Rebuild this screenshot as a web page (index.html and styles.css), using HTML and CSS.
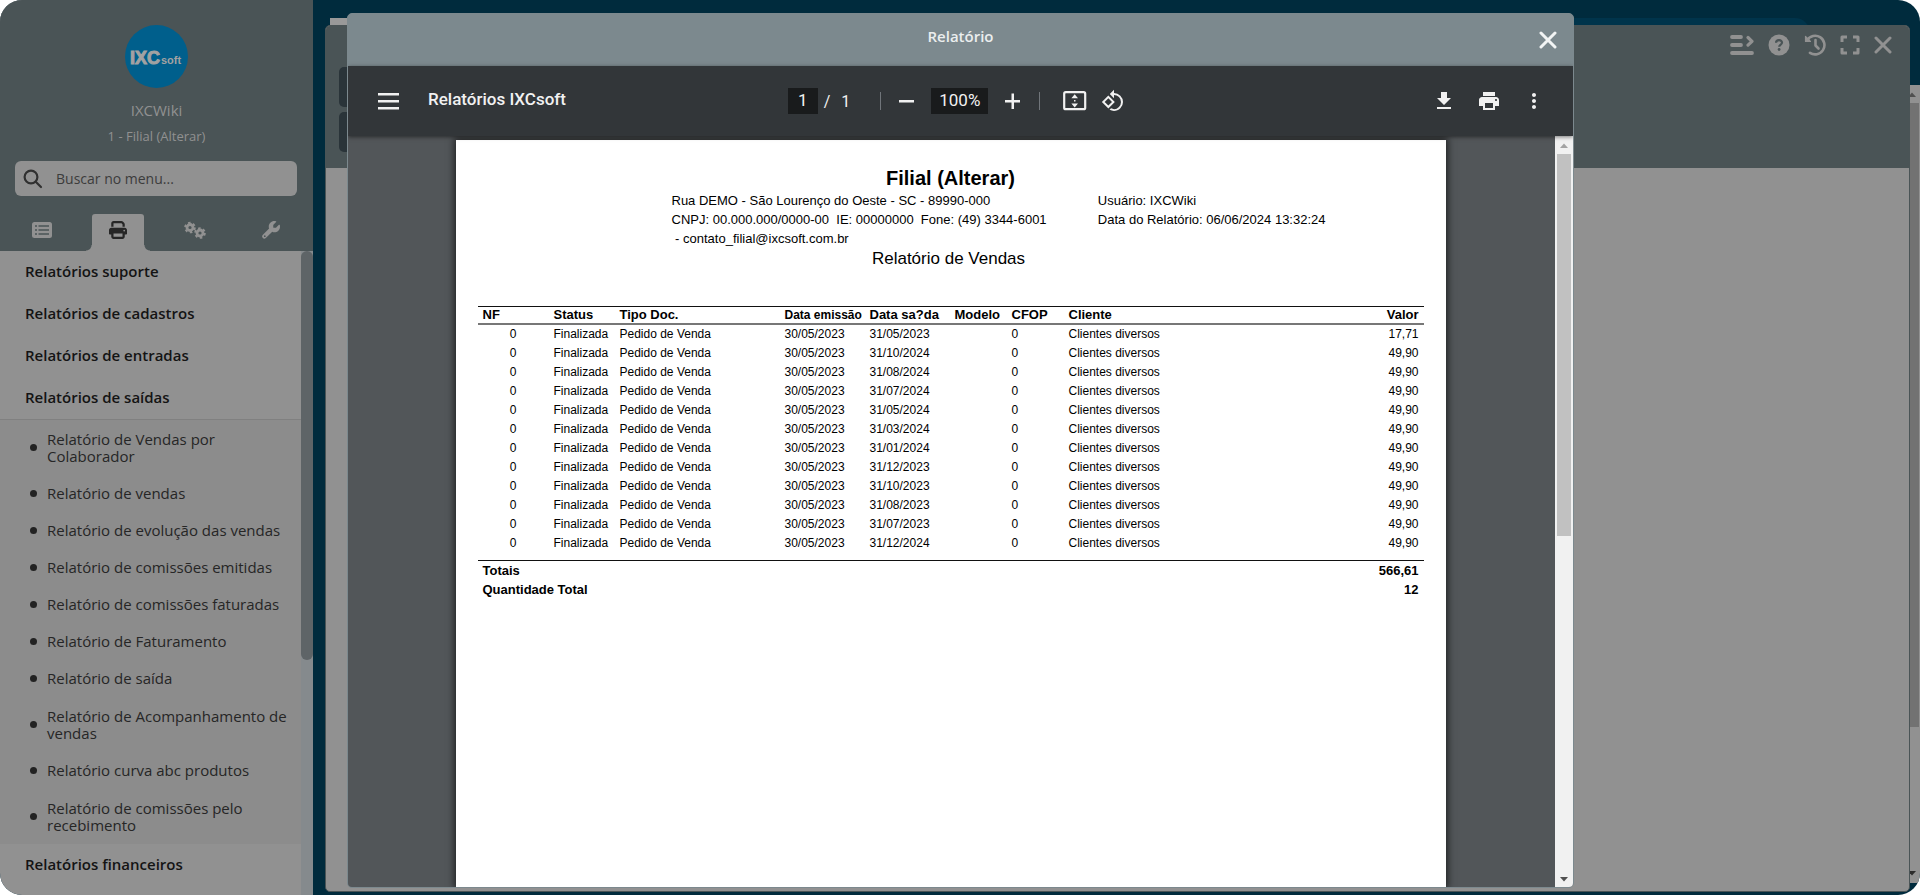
FILE: index.html
```html
<!DOCTYPE html>
<html lang="pt-BR">
<head>
<meta charset="utf-8">
<title>Relatório</title>
<link rel="stylesheet" href="styles.css">
</head>
<body>
<div class="app">
  <aside class="sidebar">
    <header class="profile">
      <svg class="logo" viewBox="0 0 63 63" role="img" aria-label="IXCsoft">
        <circle cx="31.5" cy="31.5" r="31.5" fill="#005f8c"/>
        <text class="logo-main" x="5" y="39">IXC</text>
        <text class="logo-sub" x="36" y="39">soft</text>
      </svg>
      <div class="user">IXCWiki</div>
      <div class="branch">1 - Filial (Alterar)</div>
      <label class="search">
        <svg width="20" height="20" viewBox="0 0 20 20" fill="none" stroke="#303030" stroke-width="2.2" stroke-linecap="round"><circle cx="8" cy="8" r="6.4"/><path d="M13 13l5 5"/></svg>
        <input type="text" placeholder="Buscar no menu..." aria-label="Buscar no menu">
      </label>
      <nav class="tabs">
        <button class="tab" aria-label="Lista"><svg width="20" height="16" viewBox="0 0 20 16"><rect width="20" height="16" rx="2.5" fill="#919191"/><path d="M3 4h2M3 8h2M3 12h2M6.500 4H17M6.500 8H17M6.500 12H17" stroke="#4a5456" stroke-width="1.600"/></svg></button>
        <button class="tab tab-on" aria-label="Relatórios"><svg width="18" height="18" viewBox="0 0 512 512" fill="#262626"><path d="M128 0C93 0 64 29 64 64v96h64V64h227l29 29v67h64V93c0-17-7-33-19-45L400 19C388 7 372 0 355 0H128zm256 352v96H128v-96h256zm64 32h32c18 0 32-14 32-32v-96c0-35-29-64-64-64H64c-35 0-64 29-64 64v96c0 18 14 32 32 32h32v64c0 35 29 64 64 64h256c35 0 64-29 64-64v-64zm-16-88a24 24 0 110-48 24 24 0 010 48z"/></svg></button>
        <button class="tab" aria-label="Configurações"><svg width="22" height="18" viewBox="0 0 22 18" fill="none" stroke="#919191"><circle cx="6" cy="6.500" r="3" stroke-width="2.800"/><circle cx="6" cy="6.500" r="4.800" stroke-width="2" stroke-dasharray="2.500 2.526"/><circle cx="16" cy="12" r="3" stroke-width="2.800"/><circle cx="16" cy="12" r="4.800" stroke-width="2" stroke-dasharray="2.500 2.526"/></svg></button>
        <button class="tab" aria-label="Ferramentas"><svg width="18" height="18" viewBox="0 0 512 512" fill="#919191"><path d="M352 320c88 0 160-72 160-160 0-15-2-30-6-45-3-11-17-14-25-5l-77 76c-3 3-7 5-11 5h-57c-9 0-16-7-16-16v-57c0-4 2-8 5-11l76-77c9-8 6-22-5-25-14-4-29-5-44-5-88 0-160 72-160 160 0 19 3 37 10 54L19 396a63.200 63.200 0 0089 89l184-182c19 11 38 17 60 17zM80 408a24 24 0 110 48 24 24 0 010-48z"/></svg></button>
      </nav>
    </header>
    <div class="menu-wrap">
      <nav class="menu">
        <a class="group" href="#">Relatórios suporte</a>
        <a class="group" href="#">Relatórios de cadastros</a>
        <a class="group" href="#">Relatórios de entradas</a>
        <a class="group" href="#">Relatórios de saídas</a>
        <ul class="sub">
          <li><a class="two" href="#">Relatório de Vendas por Colaborador</a></li>
          <li><a href="#">Relatório de vendas</a></li>
          <li><a href="#">Relatório de evolução das vendas</a></li>
          <li><a href="#">Relatório de comissões emitidas</a></li>
          <li><a href="#">Relatório de comissões faturadas</a></li>
          <li><a href="#">Relatório de Faturamento</a></li>
          <li><a href="#">Relatório de saída</a></li>
          <li><a class="two" href="#">Relatório de Acompanhamento de vendas</a></li>
          <li><a href="#">Relatório curva abc produtos</a></li>
          <li><a class="two" href="#">Relatório de comissões pelo recebimento</a></li>
        </ul>
        <a class="group" href="#">Relatórios financeiros</a>
      </nav>
      <div class="menu-track"><div class="menu-thumb"></div></div>
    </div>
  </aside>

  <main class="desk">
    <div class="desk-tab"></div>
    <div class="desk-pill"></div>
    <div class="desk-scroll">
      <svg width="10" height="18" viewBox="0 0 10 18"><path d="M-2 12l4-4.500 4 4.500z" fill="#505050"/></svg>
      <div class="desk-thumb"></div>
      <svg width="10" height="18" viewBox="0 0 10 18"><path d="M-2 6l4 4.500 4-4.500z" fill="#2c2c2c"/></svg>
    </div>
    <section class="window">
      <div class="window-head">
        <div class="window-side"><span></span><span></span></div>
        <div class="window-tools">
          <button aria-label="Recolher"><svg width="24" height="20" viewBox="0 0 24 20" fill="none" stroke="#919191" stroke-width="3.800" stroke-linecap="round"><path d="M2 2h9M2 10h9M2 18h20"/><path d="M18 2.500l4 3.800-4 3.800" stroke-width="3.200" stroke-linejoin="round"/></svg></button>
          <button aria-label="Ajuda"><svg width="22" height="22" viewBox="0 0 22 22"><circle cx="11" cy="11" r="10.500" fill="#919191"/><path d="M8 8.700c.2-3.500 6.200-3.300 6 .1-.1 1.800-2.800 1.900-2.800 4" fill="none" stroke="#4a5456" stroke-width="2.200"/><circle cx="11.100" cy="15.500" r="1.400" fill="#4a5456"/></svg></button>
          <button aria-label="Histórico"><svg width="22" height="22" viewBox="0 0 22 22" fill="none" stroke="#919191" stroke-width="2.600" stroke-linecap="round" stroke-linejoin="round"><path d="M3.200 6.200A9.300 9.300 0 1 1 6 18.800"/><path d="M1.500 2.500v5h5z" fill="#919191" stroke-width="1.200"/><path d="M11.500 6v5.500l3 3"/></svg></button>
          <button aria-label="Tela cheia"><svg width="20" height="20" viewBox="0 0 20 20" fill="none" stroke="#919191" stroke-width="3" stroke-linejoin="round"><path d="M2 7V2h5M13 2h5v5M18 13v5h-5M7 18H2v-5"/></svg></button>
          <button aria-label="Fechar janela"><svg width="18" height="18" viewBox="0 0 18 18" stroke="#919191" stroke-width="3" stroke-linecap="round"><path d="M2 2l14 14M16 2L2 16"/></svg></button>
        </div>
      </div>
    </section>
  </main>

  <section class="modal" role="dialog" aria-label="Relatório">
    <header class="modal-head">
      <h1>Relatório</h1>
      <button class="close" aria-label="Fechar"><svg width="18" height="18" viewBox="0 0 18 18" stroke="#f2f4f4" stroke-width="3" stroke-linecap="round"><path d="M2 2l14 14M16 2L2 16"/></svg></button>
    </header>
    <div class="toolbar">
      <div class="bar-left">
        <button aria-label="Menu"><svg width="22" height="18" viewBox="0 0 22 18" fill="#f1f1f1"><path d="M0 1h21v2.500H0zM0 8h21v2.500H0zM0 15h21v2.500H0z"/></svg></button>
        <span class="doc-name">Relatórios IXCsoft</span>
      </div>
      <div class="bar-mid">
        <input class="page-no" type="text" value="1" aria-label="Página"><span class="slash">/</span><span class="pages">1</span>
        <i class="rule"></i>
        <button aria-label="Diminuir zoom"><svg width="16" height="16" viewBox="0 0 16 16"><path d="M0 7h15v2.500H0z" fill="#f1f1f1"/></svg></button>
        <input class="zoom" type="text" value="100%" aria-label="Zoom">
        <button aria-label="Aumentar zoom"><svg width="16" height="16" viewBox="0 0 16 16"><path d="M0 7h6.500V.5H9V7h6v2.500H9V16H6.500V9.500H0z" fill="#f1f1f1"/></svg></button>
        <i class="rule rule-2"></i>
        <button class="fit" aria-label="Ajustar à página"><svg width="24" height="20" viewBox="0 0 24 20"><rect x="1.200" y="1.200" width="21" height="17" rx="1.500" fill="none" stroke="#f1f1f1" stroke-width="2.200"/><path d="M11.700 3.300l3.300 4h-6.600zM11.700 16.400l3.300-4h-6.600zM11 9h1.500v1.500H11z" fill="#f1f1f1"/></svg></button>
        <button aria-label="Girar"><svg width="24" height="24" viewBox="0 0 24 24" fill="#f1f1f1"><path d="M7.340 6.410L.86 12.900l6.490 6.480 6.490-6.480-6.500-6.490zM3.690 12.900l3.660-3.660L11 12.900l-3.660 3.660-3.650-3.660zm15.670-6.260A8.950 8.950 0 0013 4V.76L8.760 5 13 9.240V6c1.790 0 3.580.68 4.950 2.050a7.007 7.007 0 010 9.900 6.973 6.973 0 01-7.920 1.410l-1.490 1.490C10.020 21.620 11.510 22 13 22c2.300 0 4.610-.88 6.360-2.640a8.980 8.980 0 000-12.720z"/></svg></button>
      </div>
      <div class="bar-right">
        <button aria-label="Baixar"><svg width="24" height="24" viewBox="0 0 24 24" fill="#f1f1f1"><path d="M19 9h-4V3H9v6H5l7 7 7-7zM5 18v2h14v-2H5z"/></svg></button>
        <button aria-label="Imprimir"><svg width="24" height="24" viewBox="0 0 24 24" fill="#f1f1f1"><path d="M19 8H5c-1.660 0-3 1.340-3 3v6h4v4h12v-4h4v-6c0-1.660-1.340-3-3-3zm-3 11H8v-5h8v5zm3-7c-.55 0-1-.45-1-1s.45-1 1-1 1 .45 1 1-.45 1-1 1zm-1-9H6v4h12V3z"/></svg></button>
        <button aria-label="Mais"><svg width="24" height="24" viewBox="0 0 24 24" fill="#f1f1f1"><path d="M12 8c1.100 0 2-.9 2-2s-.9-2-2-2-2 .9-2 2 .9 2 2 2zm0 2c-1.100 0-2 .9-2 2s.9 2 2 2 2-.9 2-2-.9-2-2-2zm0 6c-1.100 0-2 .9-2 2s.9 2 2 2 2-.9 2-2-.9-2-2-2z"/></svg></button>
      </div>
    </div>
    <div class="viewer">
      <div class="canvas">
        <article class="paper">
          <h2>Filial (Alterar)</h2>
          <div class="info">
            <div class="info-main">Rua DEMO - São Lourenço do Oeste - SC - 89990-000<br>CNPJ: 00.000.000/0000-00&nbsp; IE: 00000000&nbsp; Fone: (49) 3344-6001<br>&nbsp;- contato_filial@ixcsoft.com.br</div>
            <div>Usuário: IXCWiki<br>Data do Relatório: 06/06/2024 13:32:24</div>
          </div>
          <h3>Relatório de Vendas</h3>
          <table class="report">
            <colgroup><col class="c-nf"><col class="c-status"><col class="c-doc"><col class="c-date"><col class="c-date"><col class="c-model"><col class="c-model"><col class="c-client"><col></colgroup>
            <thead><tr><th>NF</th><th>Status</th><th>Tipo Doc.</th><th class="small">Data emissão</th><th>Data sa?da</th><th>Modelo</th><th>CFOP</th><th>Cliente</th><th class="num">Valor</th></tr></thead>
            <tbody>
              <tr><td class="nf">0</td><td>Finalizada</td><td>Pedido de Venda</td><td>30/05/2023</td><td>31/05/2023</td><td></td><td>0</td><td>Clientes diversos</td><td class="num">17,71</td></tr>
              <tr><td class="nf">0</td><td>Finalizada</td><td>Pedido de Venda</td><td>30/05/2023</td><td>31/10/2024</td><td></td><td>0</td><td>Clientes diversos</td><td class="num">49,90</td></tr>
              <tr><td class="nf">0</td><td>Finalizada</td><td>Pedido de Venda</td><td>30/05/2023</td><td>31/08/2024</td><td></td><td>0</td><td>Clientes diversos</td><td class="num">49,90</td></tr>
              <tr><td class="nf">0</td><td>Finalizada</td><td>Pedido de Venda</td><td>30/05/2023</td><td>31/07/2024</td><td></td><td>0</td><td>Clientes diversos</td><td class="num">49,90</td></tr>
              <tr><td class="nf">0</td><td>Finalizada</td><td>Pedido de Venda</td><td>30/05/2023</td><td>31/05/2024</td><td></td><td>0</td><td>Clientes diversos</td><td class="num">49,90</td></tr>
              <tr><td class="nf">0</td><td>Finalizada</td><td>Pedido de Venda</td><td>30/05/2023</td><td>31/03/2024</td><td></td><td>0</td><td>Clientes diversos</td><td class="num">49,90</td></tr>
              <tr><td class="nf">0</td><td>Finalizada</td><td>Pedido de Venda</td><td>30/05/2023</td><td>31/01/2024</td><td></td><td>0</td><td>Clientes diversos</td><td class="num">49,90</td></tr>
              <tr><td class="nf">0</td><td>Finalizada</td><td>Pedido de Venda</td><td>30/05/2023</td><td>31/12/2023</td><td></td><td>0</td><td>Clientes diversos</td><td class="num">49,90</td></tr>
              <tr><td class="nf">0</td><td>Finalizada</td><td>Pedido de Venda</td><td>30/05/2023</td><td>31/10/2023</td><td></td><td>0</td><td>Clientes diversos</td><td class="num">49,90</td></tr>
              <tr><td class="nf">0</td><td>Finalizada</td><td>Pedido de Venda</td><td>30/05/2023</td><td>31/08/2023</td><td></td><td>0</td><td>Clientes diversos</td><td class="num">49,90</td></tr>
              <tr><td class="nf">0</td><td>Finalizada</td><td>Pedido de Venda</td><td>30/05/2023</td><td>31/07/2023</td><td></td><td>0</td><td>Clientes diversos</td><td class="num">49,90</td></tr>
              <tr><td class="nf">0</td><td>Finalizada</td><td>Pedido de Venda</td><td>30/05/2023</td><td>31/12/2024</td><td></td><td>0</td><td>Clientes diversos</td><td class="num">49,90</td></tr>
            </tbody>
          </table>
          <dl class="totals">
            <div><dt>Totais</dt><dd>566,61</dd></div>
            <div><dt>Quantidade Total</dt><dd>12</dd></div>
          </dl>
        </article>
      </div>
      <div class="track">
        <svg width="18" height="18" viewBox="0 0 18 18"><path d="M5 12l4-4.500 4 4.500z" fill="#a3a3a3"/></svg>
        <div class="thumb"></div>
        <svg class="down" width="18" height="18" viewBox="0 0 18 18"><path d="M5 8l4 4.500L13 8z" fill="#505050"/></svg>
      </div>
    </div>
  </section>
</div>
</body>
</html>
```
FILE: styles.css
```css
* { box-sizing: border-box; }
body { margin: 0; background: #fff; font-family: "Open Sans", "Noto Sans", sans-serif; }
button { border: 0; padding: 0; background: none; display: flex; align-items: center; justify-content: center; }
svg { display: block; flex: none; }
h1, h2, h3, dl, dd, ul { margin: 0; padding: 0; }
a { color: inherit; text-decoration: none; }

.app { position: relative; display: flex; height: 100vh; overflow: hidden; border-radius: 22px; background: #002b3d; }

/* Sidebar */
.sidebar { width: 313px; flex: none; display: flex; flex-direction: column; background: #919191; }
.profile { display: flex; flex-direction: column; align-items: center; padding-top: 25px; background: #4a5456; color: #919191; }
.logo { width: 63px; height: 63px; }
.logo-main { font: bold 18px "Liberation Sans", sans-serif; fill: #a2a2a2; stroke: #a2a2a2; }
.logo-sub { font: bold 11px "Liberation Sans", sans-serif; fill: #a2a2a2; }
.user { margin-top: 11px; font-size: 15px; line-height: 22px; }
.branch { margin-top: 5px; font-size: 13px; line-height: 20px; }
.search { display: flex; align-items: center; gap: 13px; align-self: stretch; height: 35px; margin: 15px 16px 0 15px; padding: 0 8px; border-radius: 6px; background: #919191; }
.search input { flex: 1; min-width: 0; border: 0; padding: 0; background: none; font: 14px "Open Sans", "Noto Sans", sans-serif; outline: 0; }
.search input::placeholder { color: #3c3c3c; opacity: 1; }
.tabs { display: flex; align-self: stretch; justify-content: space-between; margin-top: 18px; padding: 0 16px; }
.tab { width: 52px; height: 37px; padding-bottom: 6px; }
.tab-on { position: relative; background: #919191; border-radius: 3px 3px 0 0; }
.tab-on::before, .tab-on::after { content: ""; position: absolute; bottom: 0; width: 6px; height: 6px; }
.tab-on::before { right: 100%; background: radial-gradient(circle at 0 0, #4a5456 5px, #919191 6px); }
.tab-on::after { left: 100%; background: radial-gradient(circle at 100% 0, #4a5456 5px, #919191 6px); }

.menu-wrap { flex: 1; min-height: 0; display: flex; overflow: hidden; }
.menu { flex: 1; }
.group { display: block; height: 42px; padding-left: 25px; font-size: 15px; font-weight: 600; line-height: 40px; color: #141414; }
.sub { list-style: none; background: #8c8c8c; border-top: 1px solid #808080; }
.sub a { display: flex; align-items: center; gap: 10px; padding: 10px 10px 10px 30px; font-size: 15px; line-height: 17px; color: #262626; }
.sub a.two { min-height: 55px; }
.sub a::before { content: ""; flex: none; width: 7px; height: 7px; border-radius: 50%; background: #222; }
.menu-track { width: 12px; background: #858a8d; }
.menu-thumb { height: 409px; border-radius: 6px; background: #5e6467; }

/* Desktop behind the dialog */
.desk { position: relative; flex: 1; padding: 25px 10px 3px 12px; display: flex; }
.desk-tab { position: absolute; left: 17px; top: 18px; width: 30px; height: 10px; background: #999; }
.desk-pill { position: absolute; left: 60px; right: 110px; top: 18px; height: 30px; border-radius: 20px; background: #00344b; }
.desk-scroll { position: absolute; right: 0; top: 85px; bottom: 12px; width: 10px; background: #919191; display: flex; flex-direction: column; }
.desk-thumb { margin-right: 1px; background: #727272; flex: 0 1 624px; }
.desk-scroll svg:last-child { margin-top: auto; }
.window { position: relative; flex: 1; border: 1px solid #4a5456; border-radius: 5px; background: #919191; overflow: hidden; }
.window-head { display: flex; justify-content: space-between; align-items: flex-start; height: 142px; background: #4a5456; }
.window-side { display: flex; flex-direction: column; gap: 5px; padding: 41px 0 0 13px; }
.window-side span { width: 40px; height: 40px; border-radius: 5px; background: #2a3439; }
.window-tools { display: flex; gap: 14px; align-items: center; padding: 8px 17px 0 0; }

/* Dialog */
.modal { position: absolute; top: 13px; bottom: 7px; left: 347px; right: 346px; display: flex; flex-direction: column; border: 1px solid #7c898e; border-radius: 5px; background: #7c898e; overflow: hidden; }
.modal-head { display: flex; align-items: center; height: 52px; flex: none; padding: 0 16px; }
.modal-head h1 { flex: 1; padding: 0 0 8px 18px; text-align: center; font-size: 15px; font-weight: 600; line-height: 22px; color: #ebeeee; }
.toolbar { position: relative; z-index: 1; display: grid; grid-template-columns: 1fr auto 1fr; align-items: center; height: 70px; flex: none; background: #323639; box-shadow: 0 1px 4px rgba(0,0,0,.5); font-family: Roboto, sans-serif; color: #f1f1f1; }
.bar-left { display: flex; align-items: center; gap: 28px; padding-left: 30px; }
.doc-name { font-size: 17px; font-weight: 500; line-height: 24px; padding-bottom: 4px; }
.bar-mid { display: flex; align-items: center; margin-right: 8px; font-size: 16px; }
.bar-mid input { height: 26px; border: 0; padding: 0 0 3px; background: #191b1c; color: #f1f1f1; font: 17px Roboto, sans-serif; text-align: center; }
.bar-mid .page-no { width: 30px; }
.bar-mid .zoom { width: 57px; margin: 0 17px 0 16px; }
.slash { margin-left: 6px; }
.pages { margin-left: 11px; }
.rule { width: 1px; height: 18px; margin: 0 18px 0 30px; background: #70757a; }
.rule-2 { margin: 0 23px 0 18px; }
.fit { margin-right: 14px; }
.bar-right { display: flex; justify-content: flex-end; gap: 21px; padding-right: 27px; }

.viewer { flex: 1; min-height: 0; display: flex; background: #525659; }
.canvas { flex: 1; display: flex; justify-content: center; padding: 4px 13px 0 11px; overflow: hidden; }
.paper { width: 100%; max-width: 990px; padding: 27px 22px 0; background: #fff; color: #000; box-shadow: 0 0 7px 2px rgba(0,0,0,.6); font-family: "Liberation Sans", Arial, sans-serif; font-size: 13px; }
.paper h2 { font-size: 20px; line-height: 22px; text-align: center; padding-bottom: 2px; }
.info { display: flex; justify-content: space-between; padding: 0 98px 0 194px; line-height: 19px; }
.paper h3 { margin-top: 1px; font-size: 17px; font-weight: 400; line-height: 20px; padding-right: 4px; text-align: center; }
.report { width: 100%; margin-top: 37px; table-layout: fixed; border-collapse: separate; border-spacing: 0; border-bottom: 1px solid #111; padding-bottom: 7px; }
.report th { height: 19px; padding: 0 5px; border-top: 1px solid #111; border-bottom: 2px solid #777; text-align: left; font-size: 13px; line-height: 16px; white-space: nowrap; }
.report th.small { font-size: 12px; }
.report td { height: 19px; padding: 0 5px; font-size: 12px; line-height: 19px; white-space: nowrap; }
.report .nf { padding-right: 32px; text-align: right; }
.report .num { text-align: right; }
.c-nf { width: 71px; }
.c-status { width: 66px; }
.c-doc { width: 165px; }
.c-date { width: 85px; }
.c-model { width: 57px; }
.c-client { width: 236px; }
.totals { padding: 0 5px; font-weight: 700; line-height: 19px; }
.totals div { display: flex; justify-content: space-between; }
.track { width: 18px; flex: none; display: flex; flex-direction: column; background: #f1f1f1; }
.thumb { flex: 0 1 382px; margin: 0 2px; background: #c1c1c1; }
.down { margin-top: auto; }
```
